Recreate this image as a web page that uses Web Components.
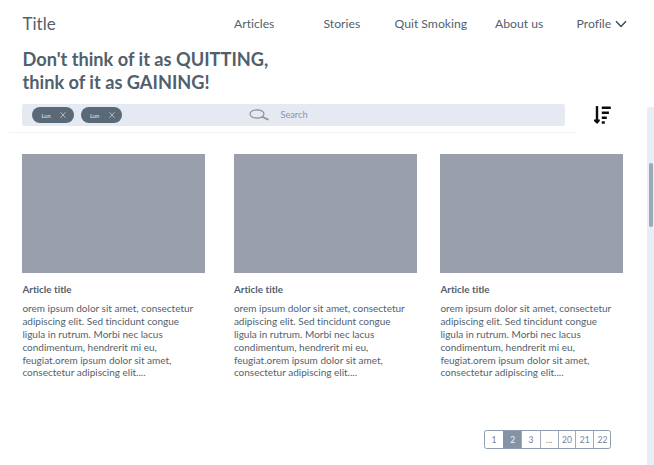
<!DOCTYPE html>
<html lang="en">
<head>
<meta charset="utf-8">
<title>Title</title>
<style>
html,body{margin:0;height:100%;background:#fff;overflow:hidden}
body{font-family:Lato,"Liberation Sans",sans-serif;color:#525f6d;font-variant-ligatures:none}
</style>
</head>
<body>
<quit-page></quit-page>
<script>
const define = (name, html, setup) => {
  const t = document.createElement('template');
  t.innerHTML = html;
  customElements.define(name, class extends HTMLElement {
    constructor() {
      super();
      this.attachShadow({mode: 'open'}).appendChild(t.content.cloneNode(true));
    }
    connectedCallback() { if (setup) setup(this); }
  });
};

define('nav-bar', `<style>
:host{display:grid;grid-template-columns:211.5px 89.5px 71px 100.5px 81.5px 1fr;height:47px;align-items:center;padding-left:22.5px;box-sizing:border-box;font-size:12.2px;white-space:nowrap}
.brand{font-size:17px}
a{color:inherit}
.profile{display:flex;align-items:center;gap:4px}
svg{display:block}
</style>
<span class="brand">Title</span><a>Articles</a><a>Stories</a><a>Quit Smoking</a><a>About us</a>
<a class="profile"><span>Profile</span><svg width="12" height="8" viewBox="0 0 12 8"><path d="M1 1.2 6 6.4 11 1.2" fill="none" stroke="#3c4650" stroke-width="1.4"/></svg></a>`);

define('page-heading', `<style>
:host{display:block}
h1{margin:0;padding:1px 0 0 22.5px;box-sizing:border-box;font-size:18.2px;line-height:23px;font-weight:700;height:57px}
</style><h1><slot></slot></h1>`);

define('filter-chip', `<style>
:host{display:flex;box-sizing:border-box;width:41.5px;height:16.5px;border-radius:9px;background:#5a6978;color:#e4e8ee;font-size:5.8px;align-items:center;justify-content:space-between;padding:0 7.5px 0 9.5px}
svg{display:block}
</style><slot></slot><svg width="6" height="6" viewBox="0 0 6 6"><path d="M.5.2 5.5 5.8M5.5.2.5 5.8" stroke="#d5dbe2" stroke-width=".7"/></svg>`);

define('search-bar', `<style>
:host{display:flex;box-sizing:border-box;width:543px;height:22px;margin-left:22px;border-radius:2px;background:#e4e9f2;align-items:center}
.chips{display:flex;gap:7px;width:227px;padding-left:10px;box-sizing:border-box}
.q{font-size:9.2px;color:#8895aa;margin-left:10.5px;line-height:12px;padding-bottom:1px}
svg{display:block}
</style>
<div class="chips"><slot></slot></div>
<svg width="21" height="12" viewBox="0 0 21 12"><g fill="none" stroke="#8b8f96"><ellipse cx="8" cy="5" rx="7" ry="4.1" stroke-width="1.15"/><path d="M13 7.8 19.5 10.7" stroke-width="1.6"/></g></svg>
<span class="q">Search</span>`);

define('sort-button', `<style>
:host{display:block;width:18px;height:20px}
svg{display:block}
</style><svg width="18" height="20" viewBox="0 0 18 20"><g fill="#0c0c0c"><path d="M2.8 1.2Q4 .6 5.2 1.2V14.6H6.8V16L4.6 18.6H3.5L1 16V14.6H2.8z"/><path d="M8.8 1.5h9v2.6h-9zM8.8 6.5h7.1v2.6H8.8zM8.8 11.4h5v2.6h-5zM8.8 16.3h3v2.5h-3z"/></g></svg>`);

define('article-card', `<style>
:host{display:block;width:183px}
.img{height:119px;background:#999fab}
h2{margin:10px 0 0;font-size:9.9px;line-height:13px;font-weight:700}
p{margin:6px 0 0;font-size:10px;line-height:12.8px;white-space:nowrap}
</style><div class="img"></div><h2><slot name="title"></slot></h2><p><slot></slot></p>`);

define('page-pager', `<style>
:host{display:flex;box-sizing:border-box;width:127px;height:19px;border:1px solid #8f9db0;border-radius:2.5px;overflow:hidden;font-size:8.6px;color:#738196}
span{width:17.7px;display:flex;align-items:center;justify-content:center;border-left:1px solid #a0acbc;box-sizing:border-box;padding-top:1px}
span:nth-child(-n+4){width:18.2px}
span:first-child{border-left:0}
span.on{background:#8593a7;color:#f2f5f9;border-color:#8593a7}
</style>`, el => {
  const current = el.getAttribute('current');
  const row = document.createElement('div');
  row.style.display = 'flex';
  for (const p of el.getAttribute('pages').split(' ')) {
    const s = document.createElement('span');
    s.textContent = p;
    if (p === current) s.className = 'on';
    row.appendChild(s);
  }
  el.shadowRoot.appendChild(row);
});

define('scroll-track', `<style>
:host{display:block;box-sizing:border-box;background:#e9edf5;padding:56px 0 0 2.5px}
i{display:block;width:4px;height:64px;border-radius:2px;background:#9ca9ba}
</style><i></i>`);

define('quit-page', `<style>
:host{display:grid;grid-template-columns:646.5px 7.5px;height:465px;overflow:hidden}
scroll-track{margin-top:107px}
.tools{display:flex;align-items:center;gap:28px;height:22px}
.rule{height:1px;margin:6px 0 0 9px;width:568px;background:#f2f3f5}
.cards{display:grid;grid-template-columns:211.5px 206.5px 183px;padding:21.4px 0 0 22.4px}
page-pager{margin:51px 0 0 484px}
</style>
<main>
<nav-bar></nav-bar>
<page-heading>Don't think of it as QUITTING,<br>think of it as GAINING!</page-heading>
<div class="tools"><search-bar><filter-chip>Lun</filter-chip><filter-chip>Lun</filter-chip></search-bar><sort-button></sort-button></div>
<div class="rule"></div>
<section class="cards"></section>
<page-pager pages="1 2 3 ... 20 21 22" current="2"></page-pager>
</main>
<scroll-track></scroll-track>`, el => {
  const cards = el.shadowRoot.querySelector('.cards');
  cards.innerHTML = ('<article-card><span slot="title">Article title</span>orem ipsum dolor sit amet, consectetur<br>adipiscing elit. Sed tincidunt congue<br>ligula in rutrum. Morbi nec lacus<br>condimentum, hendrerit mi eu,<br>feugiat.orem ipsum dolor sit amet,<br>consectetur adipiscing elit....</article-card>').repeat(3);
});
</script>
</body>
</html>
